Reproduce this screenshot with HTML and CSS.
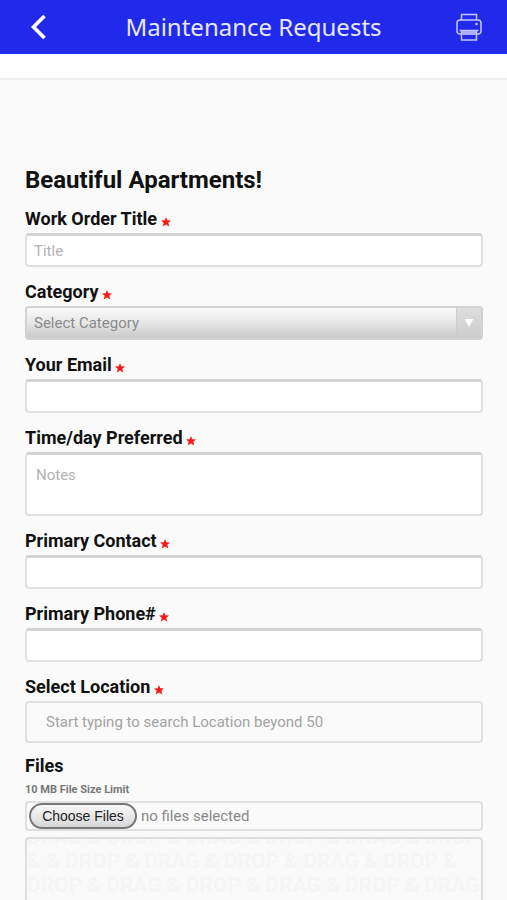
FILE: index.html
```html
<!DOCTYPE html>
<html lang="en">
<head>
<meta charset="utf-8">
<meta name="viewport" content="width=device-width, initial-scale=1">
<title>Maintenance Requests</title>
<link rel="stylesheet" href="styles.css">
</head>
<body>
<svg class="sprite" aria-hidden="true">
  <symbol id="star" viewBox="0 0 10 10"><path d="M5 0L6.300 3.200L10 3.400L7.300 5.800L8.300 9.500L5 7.500L1.700 9.500L2.700 5.800L0 3.400L3.700 3.200Z" fill="#fb1818"/></symbol>
</svg>
<header class="topbar">
  <button class="icon-button" type="button" aria-label="Back">
    <svg width="16" height="26" viewBox="0 0 16 26" fill="none" stroke="#fff" stroke-width="3.6"><path d="M14.500 2L3.500 13L14.500 24"/></svg>
  </button>
  <h1 class="topbar-title">Maintenance Requests</h1>
  <button class="icon-button" type="button" aria-label="Print">
    <svg width="26" height="28" viewBox="0 0 26 28" fill="none" stroke="#c3c6ff" stroke-width="1.5">
      <path d="M5.500 7V1.500h15V7"/>
      <path d="M5.500 21H4a3 3 0 0 1-3-3v-8a3 3 0 0 1 3-3h18a3 3 0 0 1 3 3v8a3 3 0 0 1-3 3h-1.500"/>
      <path d="M3.500 17.500h19M5.500 17.500V27h15v-9.500"/>
      <path d="M6 18h14v4H6z" fill="#a9aefb" stroke="none"/>
      <circle cx="20.500" cy="11" r=".6"/>
    </svg>
  </button>
</header>
<div class="subbar"></div>
<main class="page">
  <form class="form">
    <h2 class="form-title">Beautiful Apartments!</h2>

    <label class="label" for="title">Work Order Title <svg class="star"><use href="#star"/></svg></label>
    <input class="field" id="title" type="text" placeholder="Title">

    <label class="label" for="category">Category <svg class="star"><use href="#star"/></svg></label>
    <div class="select-box">
      <select class="select" id="category"><option>Select Category</option></select>
      <span class="select-arrow"><svg width="10" height="8" viewBox="0 0 10 8"><path d="M0.500 0h9L5 8z" fill="#fff"/></svg></span>
    </div>

    <label class="label" for="email">Your Email <svg class="star"><use href="#star"/></svg></label>
    <input class="field" id="email" type="email">

    <label class="label" for="time">Time/day Preferred <svg class="star"><use href="#star"/></svg></label>
    <textarea class="field notes" id="time" placeholder="Notes"></textarea>

    <label class="label" for="contact">Primary Contact <svg class="star"><use href="#star"/></svg></label>
    <input class="field" id="contact" type="text">

    <label class="label" for="phone">Primary Phone# <svg class="star"><use href="#star"/></svg></label>
    <input class="field" id="phone" type="tel">

    <label class="label" for="location">Select Location <svg class="star"><use href="#star"/></svg></label>
    <input class="field location" id="location" type="text" placeholder="Start typing to search Location beyond 50">

    <label class="label files-label" for="files">Files</label>
    <p class="limit">10 MB File Size Limit</p>
    <div class="file-box">
      <input class="file" id="files" type="file" multiple>
      <span>no files selected</span>
    </div>
    <div class="dropzone">
      <p>DRAG &amp; DROP &amp; DRAG &amp; DROP &amp; DRAG &amp; DROP</p>
      <p>&amp; &amp; DROP &amp; DRAG &amp; DROP &amp; DRAG &amp; DROP &amp;</p>
      <p>DROP &amp; DRAG &amp; DROP &amp; DRAG &amp; DROP &amp; DRAG</p>
    </div>
  </form>
</main>
</body>
</html>
```
FILE: styles.css
```css
* {
  box-sizing: border-box;
}

body {
  margin: 0;
  background: #fafafa;
  color: #111;
  font-family: Roboto, "Liberation Sans", sans-serif;
}

.sprite {
  position: absolute;
  width: 0;
  height: 0;
}

.topbar {
  display: flex;
  align-items: center;
  justify-content: space-between;
  height: 54px;
  padding: 0 18px;
  background: #212aeb;
}

.topbar-title {
  margin: 0;
  color: #e6e8ff;
  font: 400 24px/34px "Noto Sans", sans-serif;
}

.icon-button {
  display: flex;
  align-items: center;
  justify-content: center;
  width: 40px;
  height: 40px;
  padding: 0;
  border: 0;
  background: none;
}

.subbar {
  height: 26px;
  background: #fff;
  border-bottom: 2px solid #efefef;
}

.page {
  height: calc(100vh - 80px);
  padding: 84px 24px 0 25px;
  overflow: hidden;
}

.form-title {
  margin: 0;
  font-size: 24px;
  font-weight: 700;
  line-height: 32px;
}

.label {
  display: block;
  margin: 13px 0 2px;
  font-size: 18px;
  font-weight: 700;
  line-height: 24px;
}

.form-title + .label {
  margin-top: 11px;
}

.star {
  width: 10px;
  height: 10px;
  margin-left: -1px;
  vertical-align: -2px;
}

.field {
  display: block;
  width: 100%;
  height: 34px;
  padding: 0 7px;
  border: 2px solid #e0e0e0;
  border-top: 3px solid #d3d3d3;
  border-radius: 4px;
  background: #fff;
  color: #333;
  font: 400 15px/20px Roboto, sans-serif;
}

.field::placeholder {
  color: #b3b3b3;
}

.notes {
  height: 64px;
  padding: 10px 9px;
  resize: none;
}

.location {
  height: 42px;
  padding: 0 19px;
  border-top: 2px solid #e0e0e0;
  background: #fafafa;
}

.location::placeholder {
  color: #a3a3a3;
}

.select-box {
  display: flex;
  position: relative;
  height: 34px;
  border: 2px solid #d2d2d2;
  border-radius: 4px;
  background: linear-gradient(#fafafa, #e6e6e6 50%, #c9c9c9);
}

.select {
  flex: 1;
  appearance: none;
  padding: 0 32px 0 7px;
  border: 0;
  background: none;
  color: #8b8b8b;
  font: 400 15px/20px Roboto, sans-serif;
}

.select-arrow {
  position: absolute;
  inset: 0 0 0 auto;
  display: flex;
  align-items: center;
  justify-content: center;
  width: 25px;
  border-left: 1px solid #ccc;
  background: linear-gradient(#dedede, #ccc);
  pointer-events: none;
}

.files-label {
  margin: 11px 0 4px;
}

.limit {
  margin: 0 0 3px;
  color: #777;
  font-size: 11px;
  font-weight: 700;
  line-height: 16px;
}

.file-box {
  display: flex;
  align-items: center;
  gap: 4px;
  height: 30px;
  padding: 0 2px;
  border: 2px solid #e0e0e0;
  border-radius: 4px;
  color: #888;
  font-size: 15px;
}

.file {
  width: 108px;
  height: 26px;
  overflow: hidden;
  font-size: 15px;
}

.file::file-selector-button {
  width: 108px;
  height: 26px;
  margin: 0 8px 0 0;
  padding: 0;
  border: 2px solid #777;
  border-radius: 13px;
  background: linear-gradient(#f8f8f8, #d8d8d8);
  color: #222;
  font: 400 14px/20px "Liberation Sans", sans-serif;
}

.dropzone {
  height: 120px;
  margin-top: 6px;
  border: 2px solid #ddd;
  border-radius: 4px;
  overflow: hidden;
  color: #f5f5f5;
  font-size: 21px;
  font-weight: 700;
  line-height: 24px;
  white-space: nowrap;
}

.dropzone p {
  margin: 0;
}

.dropzone p:first-child {
  margin-top: -14px;
}
```
